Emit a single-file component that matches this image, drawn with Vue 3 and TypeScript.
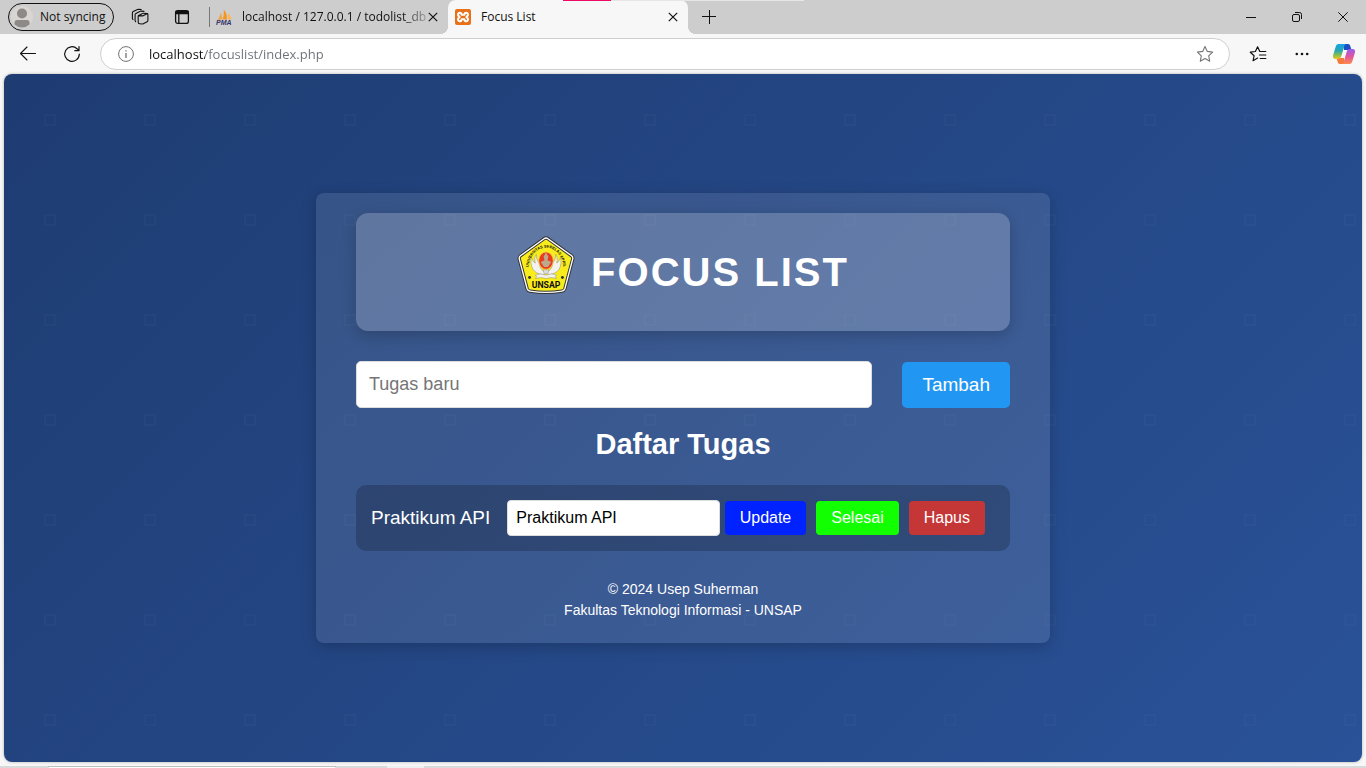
<script setup lang="ts">
import { ref } from 'vue'

interface Task {
  id: number
  title: string
  draft: string
}

const address = ref('localhost/focuslist/index.php')
const newTask = ref('')
const tasks = ref<Task[]>([{ id: 1, title: 'Praktikum API', draft: 'Praktikum API' }])

function addTask() {
  const title = newTask.value.trim()
  if (!title) return
  tasks.value.push({ id: Date.now(), title, draft: title })
  newTask.value = ''
}

function updateTask(task: Task) {
  task.title = task.draft
}

function removeTask(id: number) {
  tasks.value = tasks.value.filter((t) => t.id !== id)
}
</script>

<template>
  <div class="browser">
    <header class="tabstrip">
      <button class="profile" type="button">
        <svg width="22" height="22" viewBox="0 0 22 22" aria-hidden="true">
          <circle cx="11" cy="11" r="11" fill="#d8d5d2" />
          <circle cx="11" cy="7.500" r="5" fill="#8d8986" />
          <path d="M3.500 18.500v-2a2.500 2.500 0 0 1 2.500-2.500h10a2.500 2.500 0 0 1 2.500 2.500v2a11 11 0 0 1-15 0z" fill="#8d8986" />
        </svg>
        <span>Not syncing</span>
      </button>
      <button class="strip-btn spaces" type="button" aria-label="Workspaces">
        <svg width="18" height="18" viewBox="0 0 18 18" fill="none" stroke="#111" stroke-width="1.100" stroke-linejoin="round" stroke-linecap="round">
          <path d="M7.600 7.600l4.100.3 4.200-2.200a.7.7 0 0 1 1 .6v6.200a1.500 1.500 0 0 1-.8 1.300l-3.800 2a1.500 1.500 0 0 1-.8.200l-3-.3a1.400 1.400 0 0 1-1.300-1.400V8.200a.6.6 0 0 1 .4-.6z" />
          <path d="M7.600 7.600l4-2.100a1.500 1.500 0 0 1 .8-.2l3.800.3" />
          <path d="M4.700 13.700a1.200 1.200 0 0 1-.6-1V6.800a1.500 1.500 0 0 1 .8-1.300l4.300-2.200a1.500 1.500 0 0 1 .8-.2l3 .3" />
          <path d="M2 11.600a1.200 1.200 0 0 1-.6-1V4.900a1.500 1.500 0 0 1 .8-1.300l4.300-2.200a1.500 1.500 0 0 1 .8-.2l3 .3" />
        </svg>
      </button>
      <button class="strip-btn" type="button" aria-label="Tab actions">
        <svg width="16" height="16" viewBox="0 0 16 16" fill="none" stroke="#111" stroke-width="1.300">
          <rect x="1.600" y="1.600" width="12.800" height="12.800" rx="2.200" />
          <path d="M2 2.500h12v2H2z" fill="#111" />
          <path d="M4.800 5v9.400" />
        </svg>
      </button>
      <span class="divider"></span>
      <div class="tab idle">
        <svg width="17" height="17" viewBox="0 0 17 17" aria-hidden="true">
          <path d="M1.500 10.500C3.500 8.500 4.500 6 4.800 3.500c1 2 1.200 4.500.9 7z" fill="#f4a13a" />
          <path d="M6.400 10.500C8 7 8.200 3.500 7.600.5c2.600 2.600 3.600 6 3.400 10z" fill="#f7941e" />
          <path d="M11.700 10.500c.6-2.200.5-4.400 0-6.500 2 1.600 3.600 4 4 6.500z" fill="#f9b65c" />
          <text x="0" y="16" class="pma">PMA</text>
        </svg>
        <span class="tab-title fade">localhost / 127.0.0.1 / todolist_db</span>
        <button class="tab-close" type="button" aria-label="Close tab">
          <svg width="10" height="10" viewBox="0 0 10 10" stroke="#111" stroke-width="1.200"><path d="M.8.8l8.400 8.400M9.200.8L.8 9.200" /></svg>
        </button>
      </div>
      <div class="tab active">
        <svg width="16" height="16" viewBox="0 0 16 16" aria-hidden="true">
          <rect width="16" height="16" rx="2" fill="#e8701a" />
          <path d="M4.700 3.700a1.900 1.900 0 0 0-1.300 3.100L4.600 8 3.400 9.200a1.900 1.900 0 0 0 1.300 3.100c1.200 0 1.900-.9 1.900-2.100h2.800c0 1.200.7 2.100 1.900 2.100a1.900 1.900 0 0 0 1.300-3.100L11.400 8l1.200-1.200a1.900 1.900 0 0 0-1.300-3.100c-1.200 0-1.900.9-1.900 2.100H6.600c0-1.200-.7-2.100-1.900-2.100z" fill="none" stroke="#fff" stroke-width="2" stroke-linejoin="round" />
        </svg>
        <span class="tab-title">Focus List</span>
        <button class="tab-close" type="button" aria-label="Close tab">
          <svg width="10" height="10" viewBox="0 0 10 10" stroke="#111" stroke-width="1.200"><path d="M.8.8l8.400 8.400M9.200.8L.8 9.200" /></svg>
        </button>
        <span class="curve left"></span>
        <span class="curve right"></span>
      </div>
      <button class="new-tab" type="button" aria-label="New tab">
        <svg width="14" height="14" viewBox="0 0 14 14" stroke="#111" stroke-width="1"><path d="M7.500 0v14M0 6.500h14" /></svg>
      </button>
      <div class="window-controls">
        <button type="button" aria-label="Minimize">
          <svg width="10" height="11" viewBox="0 0 10 11" stroke="#111"><path d="M0 5.500h10" /></svg>
        </button>
        <button type="button" aria-label="Restore">
          <svg width="10" height="10" viewBox="0 0 10 10" fill="none" stroke="#111"><rect x=".5" y="2.500" width="7" height="7" rx="1.500" /><path d="M3 .5h4.500a2 2 0 0 1 2 2V7" /></svg>
        </button>
        <button type="button" aria-label="Close">
          <svg width="10" height="10" viewBox="0 0 10 10" stroke="#111"><path d="M.3.3l9.400 9.400M9.700.3L.3 9.700" /></svg>
        </button>
      </div>
      <div class="capture-bar"></div>
    </header>

    <nav class="toolbar">
      <button class="tool" type="button" aria-label="Back">
        <svg width="18" height="16" viewBox="0 0 18 16" fill="none" stroke="#111" stroke-width="1.100" stroke-linecap="round" stroke-linejoin="round"><path d="M16.500 7.500H1.500M8 1L1.500 7.500 8 14" /></svg>
      </button>
      <button class="tool" type="button" aria-label="Refresh">
        <svg width="18" height="18" viewBox="0 0 18 18" fill="none" stroke="#111" stroke-width="1.200" stroke-linecap="round" stroke-linejoin="round"><path d="M16.300 9.200A7.300 7.300 0 1 1 14 3.700l1.800 1.800M16 1.500v4.200h-4.200" /></svg>
      </button>
      <div class="omnibox">
        <svg width="16" height="16" viewBox="0 0 16 16" aria-hidden="true" fill="none" stroke="#707070"><circle cx="8" cy="8" r="7.400" /><path d="M8 7v5M8 4.200v1.300" stroke-width="1.300" /></svg>
        <input v-model="address" class="address" type="text" aria-label="Address" spellcheck="false" />
        <button class="star" type="button" aria-label="Add to favorites">
          <svg width="18" height="18" viewBox="0 0 18 18" fill="none" stroke="#757575" stroke-width="1.100" stroke-linejoin="round"><path d="M9 1.500l2.300 4.900 5.300.7-3.900 3.700 1 5.400L9 13.600l-4.700 2.600 1-5.400L1.400 7.100l5.300-.7z" /></svg>
        </button>
      </div>
      <button class="tool fav" type="button" aria-label="Favorites">
        <svg width="18" height="18" viewBox="0 0 18 18" fill="none" stroke="#111" stroke-width="1.200" stroke-linejoin="round" stroke-linecap="round"><path d="M8.600 13.100l-4.500 2.600 1-5L1.300 7.200l5.100-.7 2.200-4.700 2.200 4.600M11 6.500h5.800M10.500 10h6.300M11.200 13.500h5.600" /></svg>
      </button>
      <button class="tool more" type="button" aria-label="Settings and more">
        <svg width="14" height="4" viewBox="0 0 14 4" fill="#111"><circle cx="1.800" cy="2" r="1.300" /><circle cx="7" cy="2" r="1.300" /><circle cx="12.200" cy="2" r="1.300" /></svg>
      </button>
      <button class="tool copilot" type="button" aria-label="Copilot">
        <svg width="24" height="22" viewBox="0 0 24 22">
          <defs>
            <linearGradient id="cpA" x1="0" y1="0" x2="0" y2="1"><stop offset="0" stop-color="#19a0e8" /><stop offset=".45" stop-color="#27a6b0" /><stop offset=".75" stop-color="#8cbf4a" /><stop offset="1" stop-color="#f0c020" /></linearGradient>
            <linearGradient id="cpB" x1="0" y1="0" x2="0" y2="1"><stop offset="0" stop-color="#9a5cf0" /><stop offset=".5" stop-color="#e2549c" /><stop offset="1" stop-color="#ff8a4c" /></linearGradient>
          </defs>
          <path d="M11 1h5c1.200 0 1.900.8 2.200 1.800L19.500 7H12z" fill="#1b4fc4" />
          <path d="M13 21H8c-1.200 0-1.900-.8-2.200-1.800L4.500 15H12z" fill="#f5783c" />
          <path d="M6.500 1h8c-1.300.2-2 1.200-2.400 2.500L9.400 13c-.6 2-1.500 3-3.600 3H3.500C1.300 16 .5 14.300 1.100 12.300L3.600 4C4.200 2 5 1 6.500 1z" fill="url(#cpA)" />
          <path d="M17.500 21h-8c1.300-.2 2-1.200 2.400-2.500L14.600 9c.6-2 1.500-3 3.600-3h2.300c2.200 0 3 1.700 2.400 3.700L20.400 18c-.6 2-1.400 3-2.900 3z" fill="url(#cpB)" />
        </svg>
      </button>
    </nav>

    <main class="page">
      <svg class="pattern" aria-hidden="true">
        <defs>
          <pattern id="tiles" width="100" height="100" patternUnits="userSpaceOnUse">
            <rect x="41" y="41" width="10" height="10" fill="none" stroke="#fff" stroke-opacity=".018" stroke-width="2" />
          </pattern>
        </defs>
        <rect width="100%" height="100%" fill="url(#tiles)" />
      </svg>

      <section class="card">
        <div class="banner">
          <svg class="logo" viewBox="0 0 60 60" role="img" aria-label="UNSAP">
            <defs><path id="arcText" d="M11.500 38C11 22 20 12 30 12S49 22 48.500 38" /></defs>
            <path d="M28 2.800Q30 1.400 32 2.800L56.500 20.500Q58.200 22 57.600 24L49.500 54.500Q48.800 56.600 46.500 57Q30 59.600 13.500 57Q11.200 56.600 10.500 54.500L2.400 24Q1.800 22 3.500 20.500Z" fill="#f8ec1c" stroke="#333" stroke-width="3.400" />
            <path d="M28 2.800Q30 1.400 32 2.800L56.500 20.500Q58.200 22 57.600 24L49.500 54.500Q48.800 56.600 46.500 57Q30 59.600 13.500 57Q11.200 56.600 10.500 54.500L2.400 24Q1.800 22 3.500 20.500Z" fill="none" stroke="#fff" stroke-width="1.400" />
            <g fill="#f4f2ee" stroke="#888" stroke-width=".5">
              <path d="M27 40C17 39 13 32 15 22c1 3 2 5 4 6-1-3-1-6 1-9 0 4 1 7 3 9 0 5 4 9 7 10z" />
              <path d="M33 40c10-1 14-8 12-18-1 3-2 5-4 6 1-3 1-6-1-9 0 4-1 7-3 9 0 5-4 9-7 10z" />
              <path d="M19 40.500q5-2.500 11 0q6-2.500 11 0l-1.500 1.500 1.500 2q-6-2-11 0q-5-2-11 0l1.500-2z" />
            </g>
            <ellipse cx="30" cy="25.500" rx="7.500" ry="9" fill="#ec3a20" stroke="#f7cf4a" stroke-width=".8" />
            <path d="M30 17l2.500 4.500L31.500 25l4 2-3.500 5h-4l-3.500-5 4-2-1-3.500z" fill="#bca98c" />
            <path d="M27 35h6l-1 4h-4z" fill="#ddd" stroke="#888" stroke-width=".4" />
            <circle cx="13" cy="43" r="1.500" fill="#333" />
            <circle cx="47" cy="43" r="1.500" fill="#333" />
            <text class="logo-arc"><textPath href="#arcText" startOffset="50%" text-anchor="middle">UNIVERSITAS SEBELAS APRIL</textPath></text>
            <text x="30" y="54" text-anchor="middle" class="logo-name">UNSAP</text>
          </svg>
          <h1>FOCUS LIST</h1>
        </div>

        <form class="add" @submit.prevent="addTask">
          <input v-model="newTask" type="text" placeholder="Tugas baru" aria-label="Tugas baru" />
          <button type="submit">Tambah</button>
        </form>

        <h2>Daftar Tugas</h2>

        <ul class="tasks">
          <li v-for="task in tasks" :key="task.id">
            <label :for="`task-${task.id}`">{{ task.title }}</label>
            <input :id="`task-${task.id}`" v-model="task.draft" type="text" />
            <div class="actions">
              <button class="update" type="button" @click="updateTask(task)">Update</button>
              <button class="done" type="button">Selesai</button>
              <button class="remove" type="button" @click="removeTask(task.id)">Hapus</button>
            </div>
          </li>
        </ul>

        <footer>
          <p>© 2024 Usep Suherman</p>
          <p>Fakultas Teknologi Informasi - UNSAP</p>
        </footer>
      </section>
    </main>

    <div class="taskbar-edge"><span class="search-edge"></span><span class="item-edge"></span></div>
  </div>
</template>

<style>
body {
  margin: 0;
}
</style>

<style scoped>
* {
  box-sizing: border-box;
}
.browser {
  display: flex;
  flex-direction: column;
  min-height: 100vh;
  background: #f7f7f7;
  font-family: "Open Sans", "Noto Sans", sans-serif;
  font-size: 12px;
  line-height: 16px;
  color: #111;
}
button {
  border: 0;
  padding: 0;
  background: none;
  color: inherit;
  font: inherit;
  cursor: pointer;
}
svg {
  display: block;
  flex: none;
}

/* Tab strip */
.tabstrip {
  position: relative;
  display: flex;
  align-items: center;
  height: 34px;
  background: #cdcdcd;
}
.profile {
  display: flex;
  align-items: center;
  gap: 7px;
  width: 106px;
  height: 28px;
  margin-left: 8px;
  padding-left: 2px;
  border: 1px solid #111;
  border-radius: 14px;
  white-space: nowrap;
}
.strip-btn {
  display: grid;
  place-items: center;
  width: 42px;
  height: 34px;
}
.spaces {
  margin-left: 5px;
}
.divider {
  width: 1px;
  height: 20px;
  margin-left: 6px;
  background: #777;
}
.tab {
  display: flex;
  align-items: center;
  height: 34px;
}
.tab-title {
  flex: 1;
  white-space: nowrap;
}
.idle {
  width: 238px;
  padding: 0 10px 0 6px;
}
.fade {
  margin-left: 9px;
  mask-image: linear-gradient(to right, #000 86%, rgba(0, 0, 0, 0.2));
}
.active {
  position: relative;
  width: 240px;
  gap: 10px;
  padding: 0 10px 0 7px;
  border-radius: 8px 8px 0 0;
  background: #f7f7f7;
}
.curve {
  position: absolute;
  bottom: 0;
  width: 8px;
  height: 8px;
}
.left {
  left: -8px;
  background: radial-gradient(circle at 0 0, transparent 8px, #f7f7f7 8px);
}
.right {
  right: -8px;
  background: radial-gradient(circle at 100% 0, transparent 8px, #f7f7f7 8px);
}
.tab-close {
  display: grid;
  place-items: center;
  width: 10px;
  height: 20px;
}
.pma {
  font: italic bold 7px "Liberation Sans", sans-serif;
  fill: #34346c;
}
.new-tab {
  margin-left: 14px;
}
.window-controls {
  display: flex;
  margin-left: auto;
}
.window-controls button {
  display: grid;
  place-items: center;
  width: 46px;
  height: 34px;
}
.capture-bar {
  position: absolute;
  top: 0;
  left: 563px;
  width: 241px;
  height: 1px;
  background: linear-gradient(to right, #ec0a64 48px, #e6e6e6 48px);
}

/* Toolbar */
.toolbar {
  display: flex;
  align-items: center;
  height: 40px;
  padding-left: 6px;
}
.tool {
  display: grid;
  place-items: center;
  width: 44px;
  height: 32px;
}
.omnibox {
  display: flex;
  flex: 1;
  align-items: center;
  height: 32px;
  margin-left: 6px;
  padding: 0 15px 0 17px;
  border: 1px solid #cfcfcf;
  border-radius: 16px;
  background: #fff;
}
.address {
  flex: 1;
  min-width: 0;
  margin-left: 15px;
  padding: 0;
  border: 0;
  outline: 0;
  font: 13px/20px "Open Sans", "Noto Sans", sans-serif;
  color: transparent;
  background: linear-gradient(to right, #111 56px, #6b7078 56px);
  background-clip: text;
}
.fav {
  margin-left: 6px;
}
.copilot {
  width: 42px;
  padding-right: 2px;
}

/* Page */
.page {
  position: relative;
  display: flex;
  flex: 1;
  align-items: center;
  justify-content: center;
  margin: 0 4px 4px;
  overflow: hidden;
  border-radius: 8px;
  background: linear-gradient(135deg, #1e3c72, #2a5298);
  box-shadow: 0 0 3px rgba(0, 0, 0, 0.3);
  font-family: "Liberation Sans", Arial, sans-serif;
  color: #fff;
}
.pattern {
  position: absolute;
  inset: 0;
  width: 100%;
  height: 100%;
}
.card {
  position: relative;
  width: 100%;
  max-width: 734px;
  padding: 20px 40px 22px;
  border-radius: 8px;
  background: rgba(255, 255, 255, 0.1);
  box-shadow: 0 4px 15px rgba(0, 0, 0, 0.2);
}
.banner {
  display: flex;
  justify-content: center;
  gap: 16px;
  height: 118px;
  padding-top: 23px;
  border-radius: 12px;
  background: rgba(255, 255, 255, 0.2);
  box-shadow: 0 4px 15px rgba(0, 0, 0, 0.2);
}
.logo {
  width: 58px;
  height: 58px;
}
.logo-arc {
  font: bold 4px "Liberation Sans", sans-serif;
  fill: #111;
}
.logo-name {
  font: bold 9px Roboto, sans-serif;
  fill: #111;
}
h1 {
  margin: 13px 0 0;
  font-size: 40px;
  line-height: 46px;
  letter-spacing: 2px;
}
.add {
  display: flex;
  gap: 30px;
  margin-top: 30px;
}
.add input {
  flex: 1;
  min-width: 0;
  height: 47px;
  padding: 0 12px;
  border: 1px solid #ddd;
  border-radius: 5px;
  background: #fff;
  font: 18px "Liberation Sans", Arial, sans-serif;
}
.add input::placeholder {
  color: #757575;
}
.add button {
  align-self: flex-end;
  height: 46px;
  padding: 0 20px;
  border-radius: 5px;
  background: #2196f3;
  font-size: 19px;
}
h2 {
  margin: 20px 0 25px;
  font-size: 29px;
  line-height: 32px;
  text-align: center;
}
.tasks {
  display: grid;
  gap: 10px;
  margin: 0;
  padding: 0;
  list-style: none;
}
.tasks li {
  display: flex;
  align-items: center;
  padding: 15px 25px 15px 15px;
  border-radius: 10px;
  background: rgba(0, 0, 0, 0.2);
}
.tasks label {
  margin-right: 17px;
  font-size: 19px;
}
.tasks input {
  flex: 1;
  min-width: 0;
  height: 36px;
  padding: 0 8px;
  border: 1px solid #ddd;
  border-radius: 4px;
  background: #fff;
  font: 16px "Liberation Sans", Arial, sans-serif;
  color: #000;
}
.actions {
  display: flex;
  gap: 10px;
  margin-left: 5px;
}
.actions button {
  height: 34px;
  padding: 0 15px;
  border-radius: 4px;
  font-size: 16px;
}
.update {
  background: #0022ff;
}
.done {
  background: #11ff00;
}
.remove {
  background: #c53737;
}
footer {
  margin-top: 28px;
  font-size: 14px;
  line-height: 21px;
  text-align: center;
}
footer p {
  margin: 0;
}

/* Top edge of the desktop taskbar */
.taskbar-edge {
  display: flex;
  height: 2px;
  padding-left: 48px;
  background: #d9d9d9;
}
.search-edge {
  width: 288px;
  border: 1px solid #bfbfbf;
  border-bottom-color: #fff;
}
.item-edge {
  width: 37px;
  margin-left: 51px;
  background: #f0f0f0;
}
</style>
